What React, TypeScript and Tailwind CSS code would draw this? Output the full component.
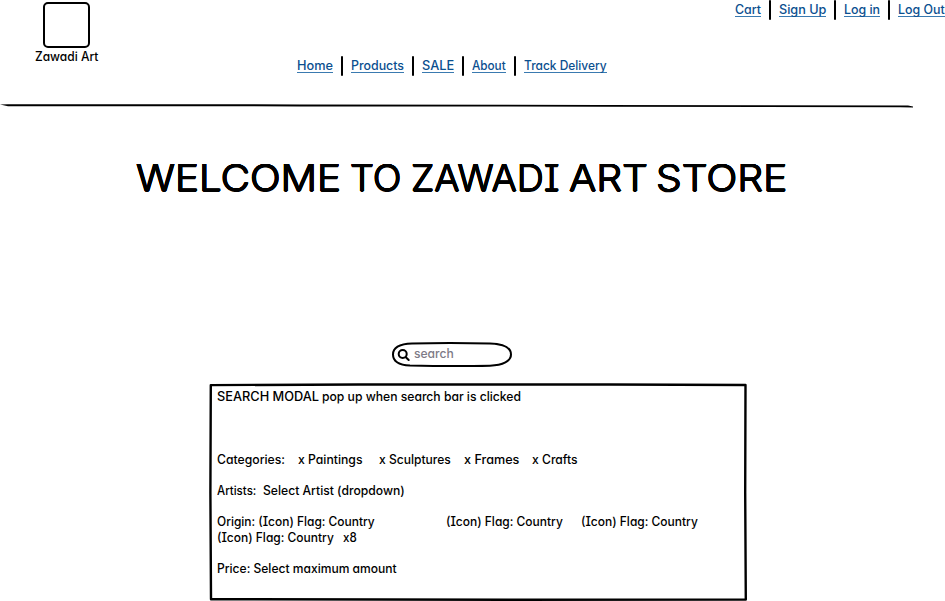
import { useLayoutEffect, useRef, useState } from "react";

type FitProps = { text: string; width: number; className?: string };

// Widens a line's letters so that the line fills the given width.
function Fit({ text, width, className = "" }: FitProps) {
  const ref = useRef<HTMLSpanElement>(null);
  const [scale, setScale] = useState(1);
  useLayoutEffect(() => {
    if (ref.current) {
      setScale(width / ref.current.offsetWidth);
    }
  }, [text, width]);
  return (
    <span className={`block shrink-0 ${className}`} style={{ width: `${width}px` }}>
      <span ref={ref} className="inline-block origin-left whitespace-pre" style={{ transform: `scaleX(${scale})` }}>
        {text}
      </span>
    </span>
  );
}

function NavLink({ text, width }: FitProps) {
  return (
    <a href="#" className="flex h-[17px] shrink-0 border-b border-[#3a7ab0] pt-[2px] text-[#0b4f8f]">
      <Fit text={text} width={width} />
    </a>
  );
}

function Bar() {
  return <span className="mx-2 h-5 w-[2px] shrink-0 rounded-full bg-black" />;
}

function Row({ children }: { children?: React.ReactNode }) {
  return <div className="flex h-[15.64px] items-start">{children}</div>;
}

export default function App() {
  return (
    <div className="h-[601px] w-[945px] overflow-hidden bg-white font-['Inter','Open_Sans',sans-serif] text-[12.4px] leading-4 font-medium text-black [font-feature-settings:'cv11','cv08']">
      <header className="h-[103px]">
        <div className="flex h-14 items-start justify-between">
          <div className="ml-[33px] flex w-[66px] flex-col items-center pt-[2px]">
            <div className="mb-px h-[46px] w-[47px] shrink-0 rounded-[5px] border-2 border-black" />
            <Fit text="Zawadi Art" width={63} />
          </div>
          <nav className="flex items-start">
            <NavLink text="Cart" width={26} />
            <Bar />
            <NavLink text="Sign Up" width={47} />
            <Bar />
            <NavLink text="Log in" width={36} />
            <Bar />
            <NavLink text="Log Out" width={47} />
          </nav>
        </div>
        <nav className="flex items-start pl-[297px]">
          <NavLink text="Home" width={36} />
          <Bar />
          <NavLink text="Products" width={53} />
          <Bar />
          <NavLink text="SALE" width={32} />
          <Bar />
          <NavLink text="About" width={34} />
          <Bar />
          <NavLink text="Track Delivery" width={83} />
        </nav>
      </header>
      <svg className="block" width="914" height="6" viewBox="0 0 914 6">
        <path d="M0 1.6 L8 1.2 L300 1.4 L600 1.9 L908 2.6 L913 3.6 L913 4.4 L900 4.3 L600 3.7 L300 3.4 L8 3.2 Z" fill="#000" />
      </svg>
      <h1 className="mt-[45px] flex h-[48px] pl-[136px] text-[37px] leading-[48px] font-light [text-shadow:0.5px_0_#000,-0.5px_0_#000,0_0.5px_#000,0_-0.5px_#000,0.4px_0.4px_#000,-0.4px_0.4px_#000,0.4px_-0.4px_#000,-0.4px_-0.4px_#000]">
        <Fit text="WELCOME" width={205} />
        <Fit text="TO" width={52} className="ml-[9px]" />
        <Fit text="ZAWADI" width={149} className="ml-[9px]" />
        <Fit text="ART" width={79} className="ml-[9px]" />
        <Fit text="STORE" width={131} className="ml-[8px]" />
      </h1>
      <div className="relative mt-[140px] ml-[392px] flex h-[25px] w-[120px] items-start text-[#7d7a86]">
        <svg className="absolute inset-0" width="120" height="25" viewBox="0 0 120 25" fill="none" stroke="#000" strokeWidth="2">
          <path d="M20 1.6 C45 .8 75 1 98 1.5 C112 2 119 6 119 12.5 C119 19 111 23.5 98 23.7 C70 24.4 45 24.2 18 23.6 C6 23 1 19 1 12.5 C1 6 7 2 20 1.6 Z" />
          <circle cx="10.7" cy="12" r="4" />
          <path d="M13.8 15.2 L16.7 18" strokeLinecap="round" />
        </svg>
        <Fit text="search" width={40} className="mt-1 ml-[22px]" />
      </div>
      <section className="relative mt-4 ml-[209px] h-[218px] w-[538px] pt-[6px] pl-2">
        <svg className="absolute inset-0" width="538" height="218" viewBox="0 0 538 218" fill="none" stroke="#000" strokeLinejoin="round">
          <path d="M1.8 2.1 L150 1.5 L400 1.5 L536.5 2 L536.2 110 L536.8 216.5 L300 216.8 L2 216.2 L1.4 110 Z" strokeWidth="2.4" />
        </svg>
        <Row>
          <Fit text="SEARCH MODAL" width={102} />
          <Fit text="pop up when search bar is clicked" width={199} className="ml-[3px]" />
        </Row>
        <Row />
        <Row />
        <Row />
        <Row>
          <Fit text="Categories:" width={68} />
          <Fit text="x Paintings" width={64} className="ml-[13px]" />
          <Fit text="x Sculptures" width={72} className="ml-[17px]" />
          <Fit text="x Frames" width={55} className="ml-[13px]" />
          <Fit text="x Crafts" width={46} className="ml-[13px]" />
        </Row>
        <Row />
        <Row>
          <Fit text="Artists:" width={39} />
          <Fit text="Select Artist (dropdown)" width={142} className="ml-[7px]" />
        </Row>
        <Row />
        <Row>
          <Fit text="Origin: (Icon) Flag: Country" width={158} />
          <Fit text="(Icon) Flag: Country" width={117} className="ml-[71px]" />
          <Fit text="(Icon) Flag: Country" width={117} className="ml-[18px]" />
        </Row>
        <Row>
          <Fit text="(Icon) Flag: Country" width={117} />
          <Fit text="x8" width={14} className="ml-[9px]" />
        </Row>
        <Row />
        <Row>
          <Fit text="Price: Select maximum amount" width={180} />
        </Row>
      </section>
    </div>
  );
}
